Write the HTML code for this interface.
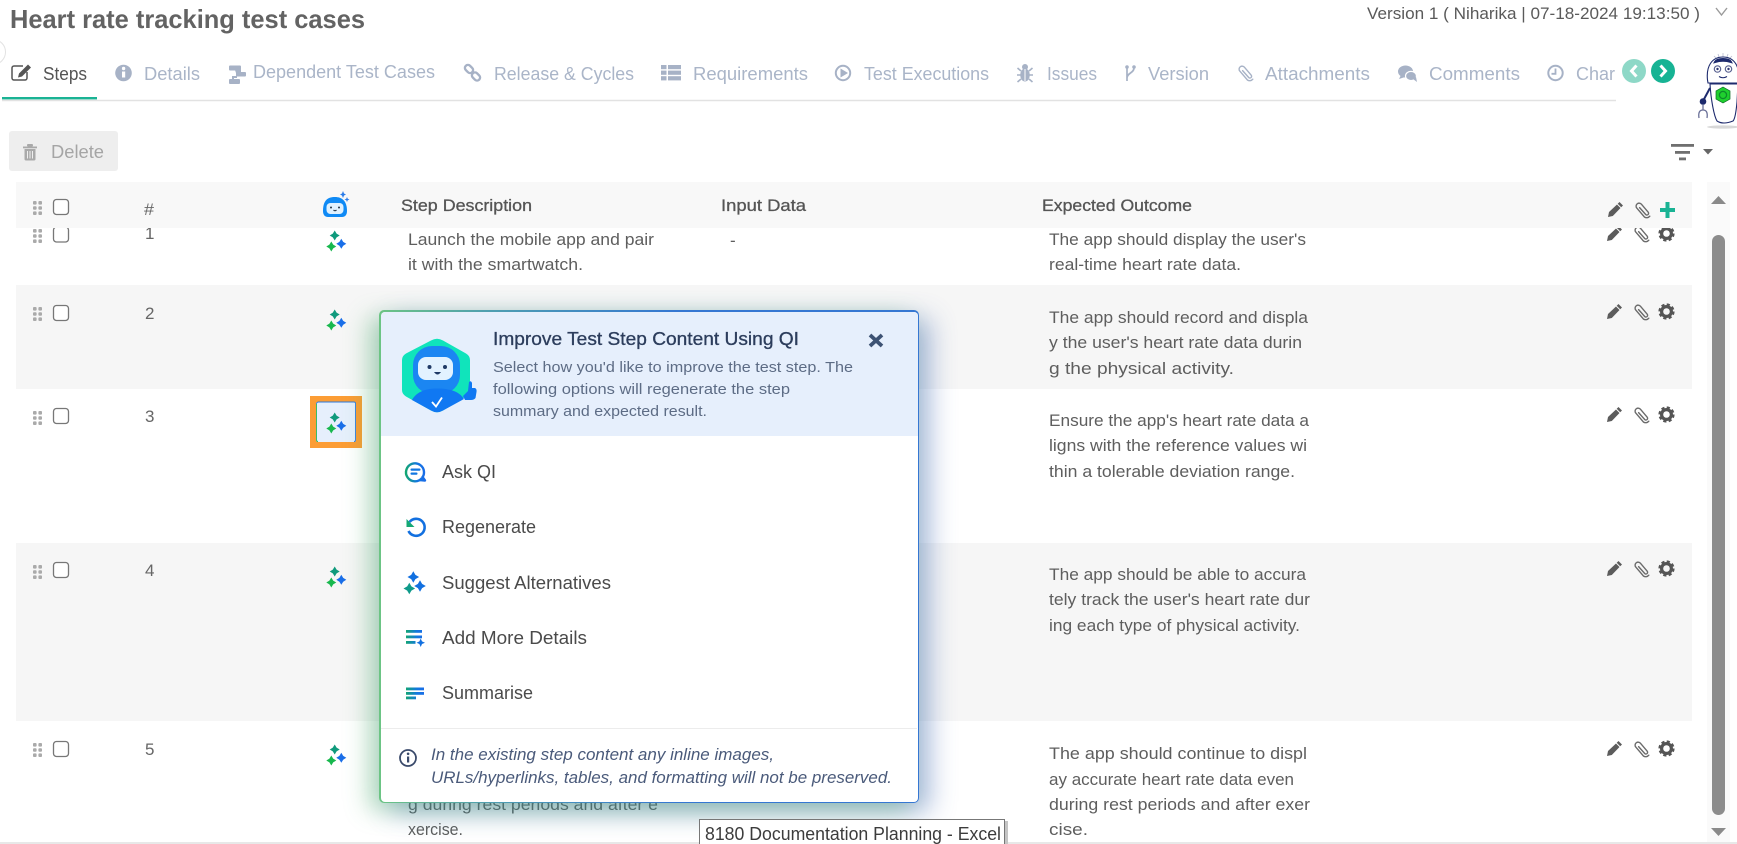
<!DOCTYPE html>
<html lang="en">
<head>
<meta charset="utf-8">
<title>Heart rate tracking test cases</title>
<style>
html,body{margin:0;padding:0;width:1737px;height:844px;overflow:hidden;background:#fff}
svg{position:absolute;left:0;top:0;display:block}
text{font-family:"Liberation Sans",sans-serif;white-space:pre}
.t{font-size:17px;fill:#5e5e5e}
.h{font-size:17px;fill:#555;stroke:#555;stroke-width:.3px}
.tab{font-size:18px;fill:#aab5c8}
.n{font-size:17px;fill:#666}
.m{font-size:18px;fill:#4a4a4a}
.d{font-size:15px;fill:#5d6c85}
.f{font-size:17px;font-style:italic;fill:#4a5a7a}
#pop{position:absolute;left:379px;top:310px;width:540px;height:493px;border-radius:5px;background:linear-gradient(90deg,#6cc484 0,#4f9fb0 20%,#3577d2 55%,#3577d2 100%);box-shadow:-11px 7px 24px rgba(70,170,100,.38),11px 9px 26px rgba(55,95,175,.42)}
#pop div{position:absolute;left:1.5px;top:1.5px;right:1.5px;bottom:1.5px;border-radius:4px;background:#fff;overflow:hidden}
#pop i{display:block;height:124.5px;background:#e6effc}
</style>
</head>
<body>
<svg width="1737" height="844" viewBox="0 0 1737 844" xmlns="http://www.w3.org/2000/svg">
<defs>
<g id="grip" fill="#aaa"><rect x="0" y="0" width="3.6" height="3.6" rx="1"/><rect x="5.4" y="0" width="3.6" height="3.6" rx="1"/><rect x="0" y="5.2" width="3.6" height="3.6" rx="1"/><rect x="5.4" y="5.2" width="3.6" height="3.6" rx="1"/><rect x="0" y="10.4" width="3.6" height="3.6" rx="1"/><rect x="5.4" y="10.4" width="3.6" height="3.6" rx="1"/></g>
<rect id="cb" x="0" y="0" width="15" height="15" rx="3" fill="#fff" stroke="#777" stroke-width="1.3"/>
<path id="star" d="M0-5 L1.9-1.9 L5 0 L1.9 1.9 L0 5 L-1.9 1.9 L-5 0 L-1.9-1.9Z"/>
<g id="spark"><use href="#star" x="6.7" y="4.500" fill="#0f9a7c"/><use href="#star" x="3.300" y="15.500" fill="#18b84e"/><use href="#star" x="13.300" y="12.800" fill="#1a6fe8"/></g>
<path id="pencil" d="M11.500 0 L15 3.500 L13.200 5.300 L9.700 1.800Z M9 2.500 L12.500 6 L4.800 14 L0 15 L1 10Z"/>
<g id="clip" fill="none" stroke-width="1.400" stroke-linecap="round"><path d="M4.600 5.600 L10.600 12.400 a1.700 1.700 0 0 0 2.600-2.200 L6.400 2.200 a3 3 0 0 0-4.600 3.900 L9.400 15 a4 4 0 0 0 5.400-.8"/></g>
<g id="gear" fill="#555"><circle cx="8" cy="7.500" r="4.900" fill="none" stroke="#555" stroke-width="3.200"/><circle cx="8" cy="7.500" r="7" fill="none" stroke="#555" stroke-width="2.200" stroke-dasharray="3.200 2.300"/></g>
<g id="acts"><use href="#pencil" x="0" y="0" fill="#5c5c5c"/><use href="#clip" x="27" y="0" stroke="#6b6b6b"/><use href="#gear" x="51.500" y="0"/></g>
</defs>

<!-- left edge arc -->
<circle cx="-7" cy="52" r="12.500" fill="#fff" stroke="#e2e2e2" stroke-width="1"/>

<!-- title & version -->
<text x="10" y="28" textLength="355" lengthAdjust="spacingAndGlyphs" style="font-size:26px;font-weight:bold;fill:#636363">Heart rate tracking test cases</text>
<text x="1367" y="19" textLength="333" lengthAdjust="spacingAndGlyphs" style="font-size:17px;fill:#5a5a5a">Version 1 ( Niharika | 07-18-2024 19:13:50 )</text>
<path d="M1716 8 L1721.500 15 L1727 8" fill="none" stroke="#9a9a9a" stroke-width="1.400"/>

<!-- tabs -->
<line x1="2" y1="100.500" x2="1616" y2="100.500" stroke="#e2e2e2" stroke-width="1.400"/>
<rect x="2" y="97" width="95" height="2.400" fill="#1ab394"/>
<text class="tab" x="43" y="80" textLength="44" lengthAdjust="spacingAndGlyphs" style="fill:#555">Steps</text>
<text class="tab" x="144" y="80" textLength="56" lengthAdjust="spacingAndGlyphs">Details</text>
<text class="tab" x="253" y="78" textLength="182" lengthAdjust="spacingAndGlyphs">Dependent Test Cases</text>
<text class="tab" x="494" y="80" textLength="140" lengthAdjust="spacingAndGlyphs">Release &amp; Cycles</text>
<text class="tab" x="693" y="80" textLength="115" lengthAdjust="spacingAndGlyphs">Requirements</text>
<text class="tab" x="864" y="80" textLength="125" lengthAdjust="spacingAndGlyphs">Test Executions</text>
<text class="tab" x="1047" y="80" textLength="50" lengthAdjust="spacingAndGlyphs">Issues</text>
<text class="tab" x="1148" y="80" textLength="61" lengthAdjust="spacingAndGlyphs">Version</text>
<text class="tab" x="1265" y="80" textLength="105" lengthAdjust="spacingAndGlyphs">Attachments</text>
<text class="tab" x="1429" y="80" textLength="91" lengthAdjust="spacingAndGlyphs">Comments</text>
<text class="tab" x="1576" y="80" textLength="39" lengthAdjust="spacingAndGlyphs">Char</text>

<!-- tab icons -->
<g fill="none" stroke="#555" stroke-width="1.500"><path d="M27 72 V78 a2 2 0 0 1-2 2 H14 a2 2 0 0 1-2-2 V68 a2 2 0 0 1 2-2 H23"/></g>
<path d="M28 64.500 L31 67.500 L22 76.500 L18 77.500 L19 73.500Z" fill="#555"/>
<circle cx="123.500" cy="73" r="8.300" fill="#a7b2c6"/><rect x="122" y="71.500" width="3.200" height="6" fill="#fff"/><circle cx="123.600" cy="68.500" r="1.700" fill="#fff"/>
<g fill="#a7b2c6"><rect x="229" y="65.500" width="12" height="5" rx="1"/><rect x="236" y="72" width="10" height="4.500" rx="1"/><rect x="229" y="79" width="11" height="5" rx="1"/><path d="M235 70 h6 v2 h-3 v1 h-2Z M232 76 h5 v2 h-3 v2 h-2Z"/></g>
<g fill="none" stroke="#a7b2c6" stroke-width="2.400"><rect x="464.500" y="66" width="9" height="6" rx="3" transform="rotate(45 469 69)"/><rect x="471.500" y="73.500" width="9" height="6" rx="3" transform="rotate(45 476 76.500)"/></g>
<g fill="#a7b2c6"><rect x="661" y="65" width="5.500" height="4.200"/><rect x="668" y="65" width="13" height="4.200"/><rect x="661" y="70.600" width="5.500" height="4.200"/><rect x="668" y="70.600" width="13" height="4.200"/><rect x="661" y="76.200" width="5.500" height="4.200"/><rect x="668" y="76.200" width="13" height="4.200"/></g>
<circle cx="843" cy="73" r="7.200" fill="none" stroke="#a7b2c6" stroke-width="2"/><path d="M840.500 68.500 L848 73 L840.500 77.500Z" fill="#a7b2c6"/>
<g fill="#a7b2c6"><ellipse cx="1025" cy="75" rx="4.800" ry="6.500"/><circle cx="1025" cy="67" r="3"/></g><g stroke="#a7b2c6" stroke-width="1.600" fill="none"><path d="M1017.500 68 L1021 71 M1032.500 68 L1029 71 M1017 75 H1021 M1033 75 H1029 M1017.500 82 L1021 79 M1032.500 82 L1029 79"/></g><line x1="1025" y1="69" x2="1025" y2="81" stroke="#fff" stroke-width="1"/>
<g fill="none" stroke="#a7b2c6" stroke-width="1.700"><path d="M1127 68 V81 M1134 68 C1134 73 1127 73 1127 78"/></g><circle cx="1127" cy="67" r="1.800" fill="#a7b2c6"/><circle cx="1134" cy="67" r="1.800" fill="#a7b2c6"/>
<use href="#clip" x="1238" y="65" stroke="#a7b2c6"/>
<g fill="#a7b2c6"><ellipse cx="1405.500" cy="71.500" rx="7.500" ry="6"/><path d="M1401 75 L1399 79 L1405 77Z"/><ellipse cx="1411" cy="76" rx="5.500" ry="4.600" stroke="#fff" stroke-width="1.200"/><path d="M1413 79 L1417 82 L1416 77Z"/></g>
<circle cx="1555.500" cy="73" r="7.200" fill="none" stroke="#a7b2c6" stroke-width="2"/><path d="M1555.500 68.500 V73.800 H1551.500" fill="none" stroke="#a7b2c6" stroke-width="1.800"/>

<!-- nav circles -->
<circle cx="1634" cy="71" r="12" fill="#8ed8c7"/><path d="M1636.500 65.500 L1631.500 71 L1636.500 76.500" fill="none" stroke="#fff" stroke-width="3"/>
<circle cx="1663" cy="71" r="12" fill="#17b394"/><path d="M1660.500 65.500 L1665.500 71 L1660.500 76.500" fill="none" stroke="#fff" stroke-width="3"/>

<!-- robot -->
<ellipse cx="1723" cy="127" rx="16" ry="1.600" fill="#d8d8d8"/>
<path d="M1723 53 V57 M1718 54 L1719 57 M1728 54 L1727 57 M1714 56 L1716 58 M1732 56 L1730 58" stroke="#b9bcd0" stroke-width=".8"/>
<path d="M1707.500 80 C1706 66 1712 57 1723 57 C1734 57 1740 66 1738.500 80 L1738 83 H1708Z" fill="#fff" stroke="#1d2a6d" stroke-width="1.100"/>
<path d="M1715 62 C1717 58 1729 58 1731 62 C1726 60.500 1720 60.500 1715 62Z" fill="#1d2a6d" stroke="#1d2a6d" stroke-width="2"/>
<circle cx="1717.500" cy="69" r="3.200" fill="#fff" stroke="#5a6291" stroke-width="1.200"/><circle cx="1728.500" cy="69" r="3.200" fill="#fff" stroke="#5a6291" stroke-width="1.200"/><circle cx="1717.500" cy="69" r="1.200" fill="#2a3270"/><circle cx="1728.500" cy="69" r="1.200" fill="#2a3270"/>
<path d="M1719 76.500 Q1723 79 1727 76.500" fill="none" stroke="#1d2a6d" stroke-width="1.100"/>
<path d="M1710 84 H1738 L1737 102 C1736 113 1735 119 1733 121 Q1723 125 1717 121 C1714 116 1711 100 1710 84Z" fill="#fff" stroke="#1d2a6d" stroke-width="1.100"/>
<path d="M1710 88 L1703 101" stroke="#1d2a6d" stroke-width="2"/><circle cx="1703" cy="101.500" r="3.300" fill="#1d2a6d"/>
<path d="M1703 105 V110 M1699 118 C1698 112 1700 110 1703 110 C1706 110 1708 112 1707 118" fill="none" stroke="#6a7098" stroke-width="1.300"/>
<polygon points="1723,87 1730,91 1730,99 1723,103 1716,99 1716,91" fill="#1fd02e" stroke="#0a6a22" stroke-width=".7"/><circle cx="1723" cy="95" r="3.600" fill="none" stroke="#0d8a2a" stroke-width="1.300"/>

<!-- toolbar -->
<rect x="9" y="131" width="109" height="40" rx="3" fill="#eeeeee"/>
<g fill="#a9a9a9"><rect x="23" y="146.500" width="14" height="1.800"/><rect x="27" y="144" width="6" height="2.500" rx="1"/><path d="M24.500 149 H35.500 V159 a1.500 1.500 0 0 1-1.500 1.500 H26 a1.500 1.500 0 0 1-1.500-1.500Z"/></g><g stroke="#eee" stroke-width="1"><line x1="27.500" y1="151" x2="27.500" y2="158.500"/><line x1="30" y1="151" x2="30" y2="158.500"/><line x1="32.500" y1="151" x2="32.500" y2="158.500"/></g>
<text x="51" y="158" textLength="53" lengthAdjust="spacingAndGlyphs" style="font-size:18px;fill:#a5a5a5">Delete</text>
<g fill="#6f6f6f"><rect x="1671" y="144" width="23" height="2.800"/><rect x="1675" y="151" width="15" height="2.800"/><rect x="1679" y="157.500" width="7" height="2.800"/></g>
<path d="M1703 149 H1713 L1708 154.500Z" fill="#666"/>

<!-- scrollbar -->
<rect x="1707" y="182" width="23" height="660" fill="#fafafa"/>
<path d="M1711 204 L1718.500 196 L1726 204Z" fill="#8a8a8a"/>
<rect x="1712" y="235" width="13" height="580" rx="6.500" fill="#8c8c8c"/>
<path d="M1711 828 L1718.500 836 L1726 828Z" fill="#8a8a8a"/>
<rect x="0" y="842" width="1737" height="2" fill="#e8e8e8"/>

<!-- rows -->
<rect x="16" y="285" width="1676" height="104" fill="#f6f6f6"/>
<rect x="16" y="543" width="1676" height="178" fill="#f6f6f6"/>

<!-- row 1 -->
<use href="#grip" x="33" y="229"/><use href="#cb" x="53.500" y="227"/>
<text class="n" x="145" y="239">1</text>
<use href="#spark" x="328" y="231"/>
<text class="t" x="408" y="245" textLength="246" lengthAdjust="spacingAndGlyphs">Launch the mobile app and pair</text>
<text class="t" x="408" y="270" textLength="175" lengthAdjust="spacingAndGlyphs">it with the smartwatch.</text>
<text class="t" x="730" y="246">-</text>
<text class="t" x="1049" y="245" textLength="257" lengthAdjust="spacingAndGlyphs">The app should display the user's</text>
<text class="t" x="1049" y="270" textLength="192" lengthAdjust="spacingAndGlyphs">real-time heart rate data.</text>
<use href="#acts" x="1607" y="226"/>

<!-- row 2 -->
<use href="#grip" x="33" y="307"/><use href="#cb" x="53.500" y="305.500"/>
<text class="n" x="145" y="319">2</text>
<use href="#spark" x="328" y="310"/>
<text class="t" x="408" y="323" textLength="250" lengthAdjust="spacingAndGlyphs">Perform a physical activity while wear</text>
<text class="t" x="1049" y="323" textLength="259" lengthAdjust="spacingAndGlyphs">The app should record and displa</text>
<text class="t" x="1049" y="348" textLength="253" lengthAdjust="spacingAndGlyphs">y the user's heart rate data durin</text>
<text class="t" x="1049" y="374" textLength="185" lengthAdjust="spacingAndGlyphs">g the physical activity.</text>
<use href="#acts" x="1607" y="304"/>

<!-- row 3 -->
<rect x="310" y="396" width="52" height="52" fill="#fc9d35"/>
<rect x="316" y="402" width="40" height="40" rx="2" fill="#e6effc"/>
<path d="M316.500 404 a2 2 0 0 1 2-2 H354 a1.500 1.500 0 0 1 1.500 1.500 V440 a1.500 1.500 0 0 1-1.500 1.500" fill="none" stroke="#2d79dc" stroke-width=".9"/>
<path d="M318 441.500 a1.500 1.500 0 0 1-1.500-1.500 V404" fill="none" stroke="#2bb659" stroke-width=".9"/>
<use href="#grip" x="33" y="411"/><use href="#cb" x="53.500" y="408.500"/>
<text class="n" x="145" y="422">3</text>
<use href="#spark" x="328" y="413"/>
<text class="t" x="1049" y="426" textLength="260" lengthAdjust="spacingAndGlyphs">Ensure the app's heart rate data a</text>
<text class="t" x="1049" y="451" textLength="258" lengthAdjust="spacingAndGlyphs">ligns with the reference values wi</text>
<text class="t" x="1049" y="477" textLength="246" lengthAdjust="spacingAndGlyphs">thin a tolerable deviation range.</text>
<use href="#acts" x="1607" y="407"/>

<!-- row 4 -->
<use href="#grip" x="33" y="565"/><use href="#cb" x="53.500" y="562.500"/>
<text class="n" x="145" y="576">4</text>
<use href="#spark" x="328" y="567"/>
<text class="t" x="1049" y="580" textLength="257" lengthAdjust="spacingAndGlyphs">The app should be able to accura</text>
<text class="t" x="1049" y="605" textLength="261" lengthAdjust="spacingAndGlyphs">tely track the user's heart rate dur</text>
<text class="t" x="1049" y="631" textLength="251" lengthAdjust="spacingAndGlyphs">ing each type of physical activity.</text>
<use href="#acts" x="1607" y="561"/>

<!-- row 5 -->
<use href="#grip" x="33" y="743"/><use href="#cb" x="53.500" y="741.500"/>
<text class="n" x="145" y="755">5</text>
<use href="#spark" x="328" y="745"/>
<text class="t" x="408" y="810" textLength="250" lengthAdjust="spacingAndGlyphs">g during rest periods and after e</text>
<text class="t" x="408" y="835" textLength="55" lengthAdjust="spacingAndGlyphs">xercise.</text>
<text class="t" x="1049" y="759" textLength="258" lengthAdjust="spacingAndGlyphs">The app should continue to displ</text>
<text class="t" x="1049" y="785" textLength="245" lengthAdjust="spacingAndGlyphs">ay accurate heart rate data even</text>
<text class="t" x="1049" y="810" textLength="261" lengthAdjust="spacingAndGlyphs">during rest periods and after exer</text>
<text class="t" x="1049" y="835" textLength="39" lengthAdjust="spacingAndGlyphs">cise.</text>
<use href="#acts" x="1607" y="741"/>

<!-- header (sits over row 1) -->
<rect x="16" y="182" width="1676" height="46" fill="#f8f8f8"/>
<use href="#grip" x="33" y="201"/><use href="#cb" x="53.500" y="199.500"/>
<text class="n" x="144" y="215" textLength="10" lengthAdjust="spacingAndGlyphs">#</text>
<path d="M323 211 C323 200 328 197 335 197 C342 197 347 201 347 211 C347 215 345 217 342 217 H328 C325 217 323 215 323 211Z" fill="#0f8af5"/>
<rect x="326.500" y="203" width="17" height="11" rx="4" fill="#dff1ff"/>
<circle cx="331" cy="207.500" r="1" fill="#234"/><circle cx="339" cy="207.500" r="1" fill="#234"/><path d="M333.500 210 Q335 211.500 336.500 210" stroke="#234" fill="none"/>
<path d="M343 191 L344 193.500 L346 194.500 L344 195.500 L343 198 L342 195.500 L340 194.500 L342 193.500Z" fill="#2a7be8"/>
<path d="M347 197 L347.700 198.700 L349.500 199.500 L347.700 200.300 L347 202 L346.300 200.300 L344.500 199.500 L346.300 198.700Z" fill="#2a7be8"/>
<text class="h" x="401" y="211" textLength="131" lengthAdjust="spacingAndGlyphs">Step Description</text>
<text class="h" x="721" y="211" textLength="85" lengthAdjust="spacingAndGlyphs">Input Data</text>
<text class="h" x="1042" y="211" textLength="150" lengthAdjust="spacingAndGlyphs">Expected Outcome</text>
<use href="#pencil" x="1608" y="202" fill="#5c5c5c"/>
<use href="#clip" x="1635" y="202" stroke="#6b6b6b"/>
<path d="M1665.500 202 H1669.500 V208 H1675 V212 H1669.500 V218 H1665.500 V212 H1660 V208 H1665.500Z" fill="#1ab394"/>
</svg>

<div id="pop"><div><i></i></div></div>

<svg width="1737" height="844" viewBox="0 0 1737 844" xmlns="http://www.w3.org/2000/svg">
<defs>
<linearGradient id="gu" gradientUnits="userSpaceOnUse" x1="405" y1="0" x2="425" y2="0"><stop offset="0" stop-color="#12a96a"/><stop offset=".6" stop-color="#1277e0"/><stop offset="1" stop-color="#1a6ce8"/></linearGradient>
<path id="s2" d="M0-5.800 L2.100-2.100 L5.800 0 L2.100 2.100 L0 5.800 L-2.100 2.100 L-5.800 0 L-2.100-2.100Z"/>
</defs>

<!-- logo -->
<path d="M431 340.500 Q437 337 443 340.500 L466 353.500 Q470 356 470 360 V390 Q470 394 466 396.500 L443 410.500 Q437 414 431 410.500 L406 396.500 Q402 394 402 390 V360 Q402 356 406 353.500Z" fill="#10e4bb"/>
<rect x="413" y="346" width="47" height="48" rx="19" fill="#1b86f2"/>
<rect x="418" y="357" width="35" height="23" rx="8" fill="#e2f2ff"/>
<circle cx="429.500" cy="367" r="2" fill="#1f3a66"/><circle cx="445" cy="367" r="2" fill="#1f3a66"/><path d="M434 372 H441 Q437.500 377 434 372Z" fill="#1f3a66"/>
<path d="M412 400 C417 391 427 388.500 437 388.500 C449 388.500 459 391 464 399 L443 410.500 Q437 414 431 410.500Z" fill="#1078f2"/>
<path d="M432 402 L436 406.500 L442 397.500" fill="none" stroke="#fff" stroke-width="1.800"/>
<path d="M463 396 L468 391 L469 382 Q471 380 472 383 L472 388 H475 Q477 389 476.500 392 L475.500 398 Q474 400 471 400 L465 400Z" fill="#1078f2"/>

<!-- heading -->
<text x="493" y="345" textLength="306" lengthAdjust="spacingAndGlyphs" style="font-size:18px;fill:#2c3d5c;stroke:#2c3d5c;stroke-width:.3px">Improve Test Step Content Using QI</text>
<path d="M870 335 L882 346 M882 335 L870 346" stroke="#3d5273" stroke-width="3.800"/>
<text class="d" x="493" y="372" textLength="360" lengthAdjust="spacingAndGlyphs">Select how you'd like to improve the test step. The</text>
<text class="d" x="493" y="394" textLength="297" lengthAdjust="spacingAndGlyphs">following options will regenerate the step</text>
<text class="d" x="493" y="416" textLength="214" lengthAdjust="spacingAndGlyphs">summary and expected result.</text>

<!-- menu -->
<text class="m" x="442" y="478" textLength="54" lengthAdjust="spacingAndGlyphs">Ask QI</text>
<text class="m" x="442" y="533" textLength="94" lengthAdjust="spacingAndGlyphs">Regenerate</text>
<text class="m" x="442" y="589" textLength="169" lengthAdjust="spacingAndGlyphs">Suggest Alternatives</text>
<text class="m" x="442" y="644" textLength="145" lengthAdjust="spacingAndGlyphs">Add More Details</text>
<text class="m" x="442" y="699" textLength="91" lengthAdjust="spacingAndGlyphs">Summarise</text>

<!-- ask icon -->
<path d="M422 478 A9 9 0 1 1 424 472 C424 474 423.500 476 422.500 477 L425 480.500 L420 480" fill="none" stroke="url(#gu)" stroke-width="2.400" stroke-linejoin="round"/>
<rect x="410.500" y="468.500" width="10" height="2.200" rx="1" fill="#1277e0"/>
<rect x="410.500" y="472.500" width="7" height="2.200" rx="1" fill="#1277e0"/>
<!-- regenerate icon -->
<path d="M409.500 522 A8.500 8.500 0 1 1 408.500 531" fill="none" stroke="#1270e0" stroke-width="2.600"/>
<path d="M406.500 519 V527 H414.500Z" fill="#14a874"/>
<!-- suggest icon -->
<use href="#s2" x="413.300" y="577" fill="#1270e0"/>
<use href="#s2" x="409.300" y="588.500" fill="#0f9a8a"/>
<use href="#s2" x="420" y="586" fill="#1270e0"/>
<!-- add details icon -->
<g fill="url(#gu)"><rect x="406" y="630" width="16" height="2.800"/><rect x="406" y="635.500" width="16" height="2.800"/><rect x="406" y="641" width="9.500" height="2.800"/></g>
<path d="M420.700 638.500 L422 641.400 L425 642.700 L422 644 L420.700 647 L419.400 644 L416.500 642.700 L419.400 641.400Z" fill="#1270e0"/>
<!-- summarise icon -->
<g fill="url(#gu)"><rect x="406" y="687.500" width="18" height="2.800"/><rect x="406" y="692" width="18" height="2.800"/><rect x="406" y="696.500" width="10" height="2.800"/></g>

<!-- footer -->
<line x1="381" y1="728.500" x2="917" y2="728.500" stroke="#ececec" stroke-width="1"/>
<circle cx="408" cy="758" r="8" fill="none" stroke="#3a4a6b" stroke-width="1.800"/>
<rect x="407" y="756.500" width="2.200" height="6" fill="#3a4a6b"/><circle cx="408.100" cy="753.800" r="1.300" fill="#3a4a6b"/>
<text class="f" x="431" y="760" textLength="343" lengthAdjust="spacingAndGlyphs">In the existing step content any inline images,</text>
<text class="f" x="431" y="783" textLength="461" lengthAdjust="spacingAndGlyphs">URLs/hyperlinks, tables, and formatting will not be preserved.</text>

<!-- native tooltip -->
<rect x="1004" y="821" width="4" height="23" fill="#c4c4c4"/>
<rect x="699.500" y="819.500" width="305" height="30" fill="#fff" stroke="#777" stroke-width="1"/>
<text x="705" y="840" textLength="296" lengthAdjust="spacingAndGlyphs" style="font-size:18.500px;fill:#3c3c3c">8180 Documentation Planning - Excel</text>
</svg>
</body>
</html>
